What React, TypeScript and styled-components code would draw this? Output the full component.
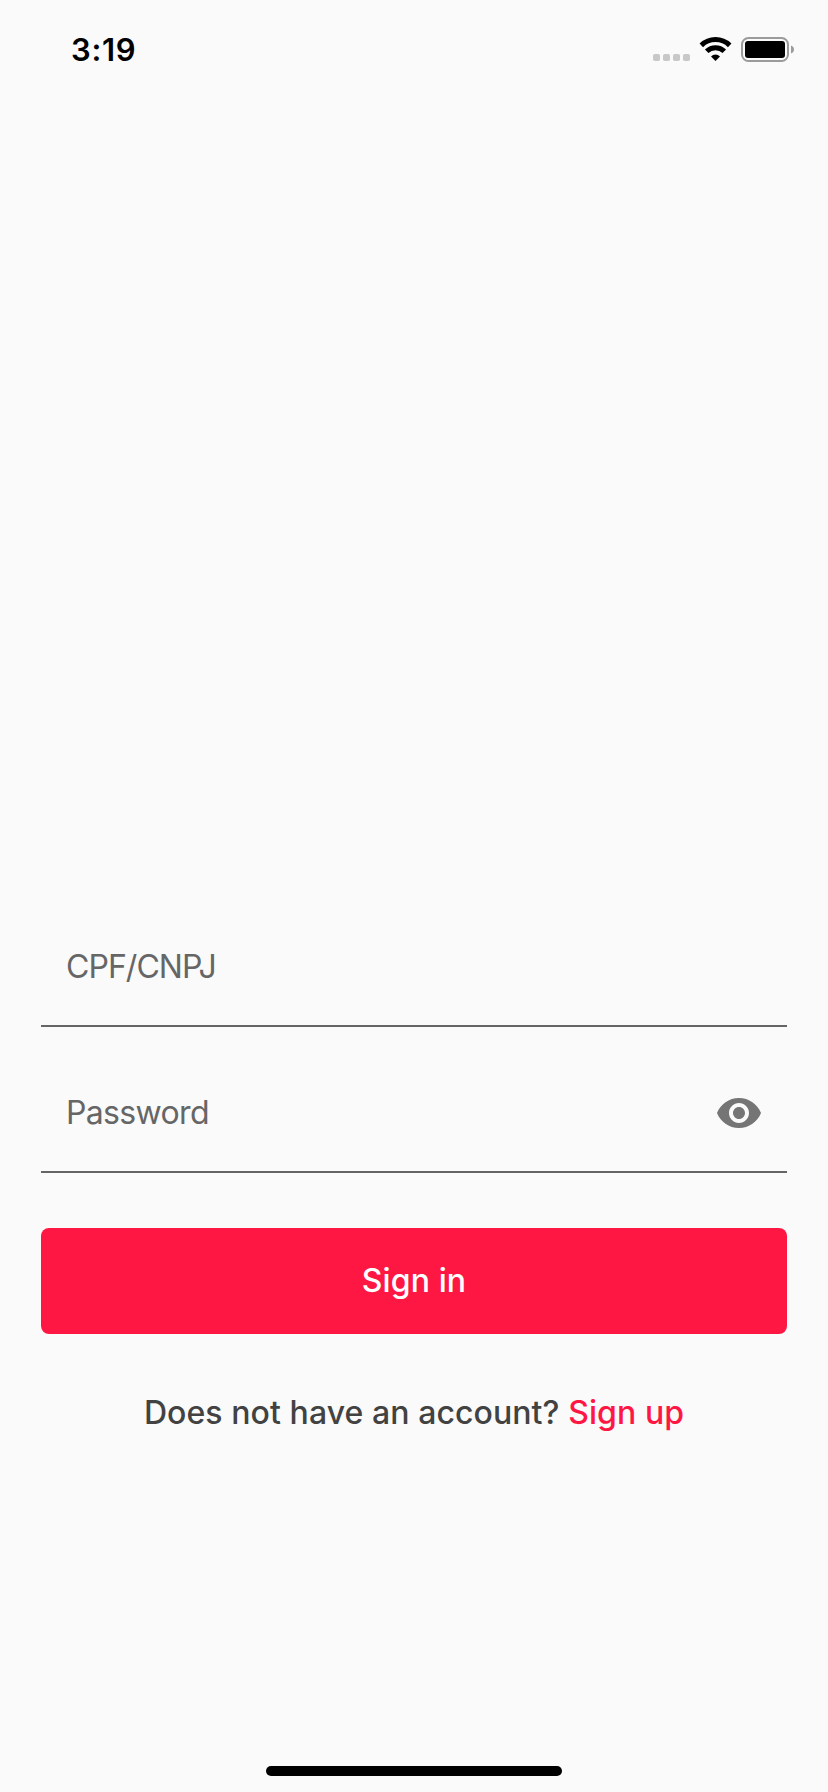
import React from "react";
import styled, { createGlobalStyle } from "styled-components";

const GlobalStyle = createGlobalStyle`
  *, *::before, *::after { box-sizing: border-box; }
  body {
    margin: 0;
    background: #fafafa;
    font-family: Inter, "Liberation Sans", sans-serif;
  }
`;

const Screen = styled.div`
  display: flex;
  flex-direction: column;
  width: 828px;
  height: 1792px;
  background: #fafafa;
  overflow: hidden;
`;

const StatusBar = styled.header`
  display: flex;
  justify-content: space-between;
  height: 88px;
  padding: 30px 33px 0 71px;
`;

const Clock = styled.time`
  height: 40px;
  line-height: 40px;
  font-size: 31px;
  font-weight: 600;
  letter-spacing: 0.7px;
  color: #000;
`;

const StatusIcons = styled.div`
  display: flex;
  height: 40px;
`;

const Form = styled.main`
  display: flex;
  flex-direction: column;
  flex: 1;
  padding: 817px 41.4px 0;
`;

const Field = styled.div`
  display: flex;
  justify-content: space-between;
  align-items: flex-start;
  height: 122px;
  margin-bottom: 24px;
  padding: 42px 24px 0 24.6px;
  border-bottom: 2px solid #656565;
`;

const FieldLabel = styled.label<{ $tracking: number }>`
  line-height: 40px;
  font-size: 32px;
  font-weight: 400;
  letter-spacing: ${(p) => p.$tracking}px;
  color: #666;
`;

const EyeButton = styled.button`
  display: flex;
  margin: -4px 0 0;
  padding: 0;
  border: 0;
  background: none;
  color: #757575;
`;

const SubmitButton = styled.button`
  height: 106px;
  margin-top: 31px;
  padding: 0 0 1px;
  border: 0;
  border-radius: 8px;
  background: #ff1744;
  color: #fff;
  font-family: inherit;
  font-size: 32px;
  font-weight: 500;
  letter-spacing: 0.1px;
`;

const SignUpPrompt = styled.p`
  margin: 59px 0 0;
  line-height: 40px;
  font-size: 32px;
  font-weight: 500;
  letter-spacing: 0.08px;
  text-align: center;
  white-space: nowrap;
  color: #424242;
`;

const SignUpLink = styled.a`
  color: #ff1744;
`;

const HomeIndicator = styled.div`
  align-self: center;
  width: 296px;
  height: 10px;
  margin-bottom: 16px;
  border-radius: 5px;
  background: #000;
`;

function StatusGlyphs() {
  return (
    <svg width="142" height="32" viewBox="653 30 142 32" aria-hidden="true">
      {[653, 663, 673, 683].map((x) => (
        <rect key={x} x={x} y="54" width="7" height="7" rx="1.8" fill="#c8c8c8" />
      ))}
      <g fill="none" stroke="#000" strokeWidth="5">
        <path d="M701.3 45.4A20.3 20.3 0 0 1 729.7 45.4" />
        <path d="M706.7 51.3A12.6 12.6 0 0 1 724.3 51.3" />
      </g>
      <path d="M711 56.4A6.4 6.4 0 0 1 720 56.4L715.5 61Z" fill="#000" />
      <rect x="742" y="38" width="46" height="23" rx="6.5" fill="none" stroke="#9b9b9b" strokeWidth="2" />
      <rect x="745" y="41" width="40" height="17" rx="3" fill="#000" />
      <path d="M791 45.5C795 46.7 795 52.3 791 53.5Z" fill="#9b9b9b" />
    </svg>
  );
}

function EyeIcon() {
  return (
    <svg width="48" height="48" viewBox="0 0 24 24" fill="currentColor" aria-hidden="true">
      <path d="M12 4.5C7 4.5 2.73 7.61 1 12c1.73 4.39 6 7.5 11 7.5s9.27-3.11 11-7.5c-1.73-4.39-6-7.5-11-7.5zM12 17c-2.76 0-5-2.24-5-5s2.24-5 5-5 5 2.24 5 5-2.24 5-5 5zm0-8c-1.66 0-3 1.34-3 3s1.34 3 3 3 3-1.34 3-3-1.34-3-3-3z" />
    </svg>
  );
}

export default function App() {
  return (
    <Screen>
      <GlobalStyle />
      <StatusBar>
        <Clock>3:19</Clock>
        <StatusIcons>
          <StatusGlyphs />
        </StatusIcons>
      </StatusBar>
      <Form>
        <Field>
          <FieldLabel $tracking={-0.95}>CPF/CNPJ</FieldLabel>
        </Field>
        <Field>
          <FieldLabel $tracking={-0.65}>Password</FieldLabel>
          <EyeButton type="button" aria-label="Show password">
            <EyeIcon />
          </EyeButton>
        </Field>
        <SubmitButton type="button">Sign in</SubmitButton>
        <SignUpPrompt>
          Does not have an account? <SignUpLink>Sign up</SignUpLink>
        </SignUpPrompt>
      </Form>
      <HomeIndicator />
    </Screen>
  );
}
